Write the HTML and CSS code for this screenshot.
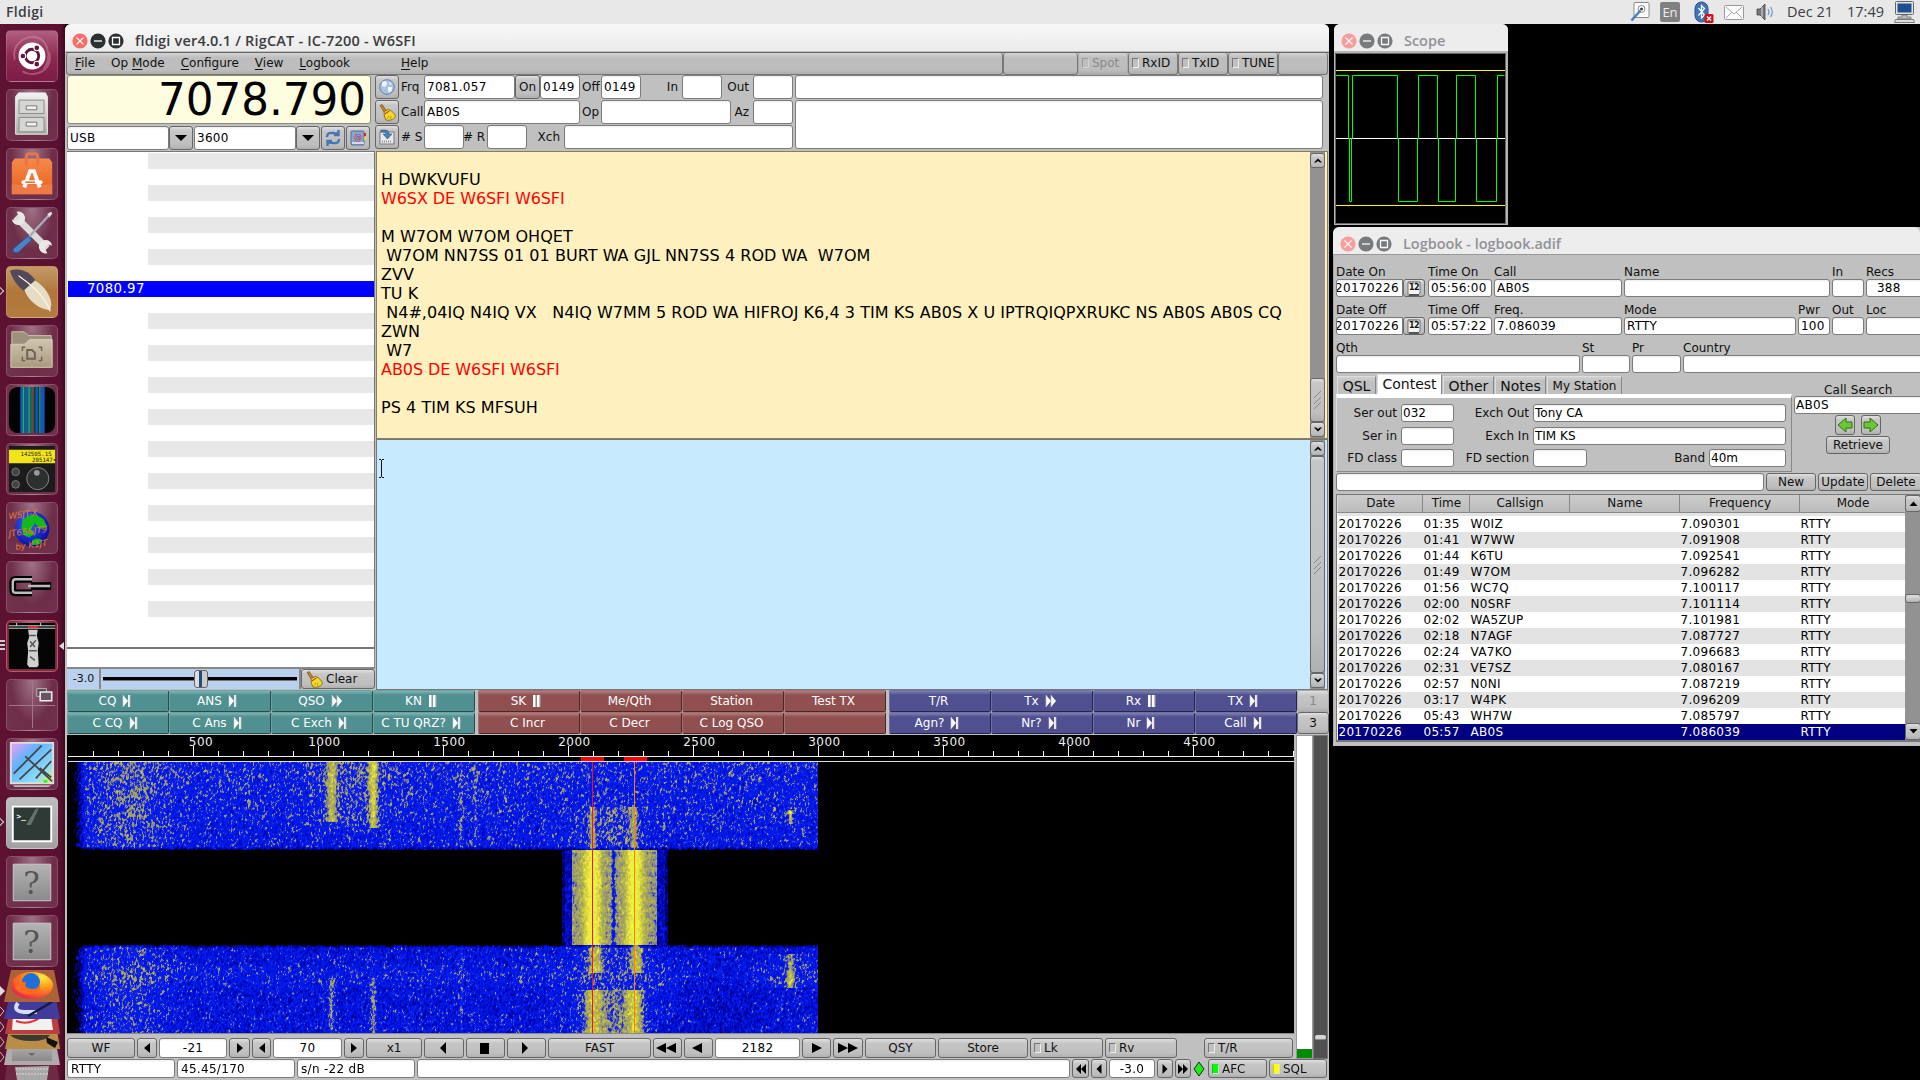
FILE: index.html
```html
<!DOCTYPE html>
<html lang="en">
<head>
<meta charset="utf-8">
<title>Fldigi</title>
<link rel="stylesheet" href="styles.css">
</head>
<body>
<svg class="defs" width="0" height="0">
  <defs>
    <linearGradient id="steel" x1="0" y1="0" x2="0" y2="1"><stop offset="0" stop-color="#f2f2ef"/><stop offset="1" stop-color="#a9aba6"/></linearGradient>
    <linearGradient id="grey" x1="0" y1="0" x2="0" y2="1"><stop offset="0" stop-color="#b4b4b4"/><stop offset="1" stop-color="#8a8a8a"/></linearGradient>
    <linearGradient id="orange" x1="0" y1="0" x2="0" y2="1"><stop offset="0" stop-color="#f6894a"/><stop offset="1" stop-color="#e8611c"/></linearGradient>
    <linearGradient id="sand" x1="0" y1="0" x2="0" y2="1"><stop offset="0" stop-color="#cfc4ae"/><stop offset="1" stop-color="#a89a80"/></linearGradient>
    <linearGradient id="sky" x1="0" y1="0" x2="1" y2="1"><stop offset="0" stop-color="#f79cf2"/><stop offset=".35" stop-color="#62b4fb"/><stop offset=".75" stop-color="#8edcf8"/><stop offset="1" stop-color="#f3f04a"/></linearGradient>
    <radialGradient id="fire" cx=".75" cy=".2" r=".9"><stop offset="0" stop-color="#ffe83a"/><stop offset=".5" stop-color="#ff8a1a"/><stop offset="1" stop-color="#e8204a"/></radialGradient>
    <radialGradient id="earth" cx=".4" cy=".35" r=".7"><stop offset="0" stop-color="#3a62ff"/><stop offset="1" stop-color="#0606a0"/></radialGradient>
    <symbol id="skip" viewBox="0 0 9 12"><path d="M1 0v12l5-6z" fill="#fff"/><path d="M6 0h2v12H6z" fill="#eee"/><path d="M8 0v12M1 0v12" stroke="#ccc" stroke-width=".6"/></symbol>
    <symbol id="fwd" viewBox="0 0 12 12"><path d="M1 0v12l5-6zM6 0v12l5-6z" fill="#fff"/><path d="M1 0v12M6 0v12" stroke="#bbb" stroke-width=".8"/></symbol>
    <symbol id="pause" viewBox="0 0 9 12"><path d="M1 0h2.600v12H1zM5 0h2.600v12H5z" fill="#fff"/><path d="M4 0v12M8 0v12" stroke="#bbb" stroke-width=".8"/></symbol>
    <symbol id="broom" viewBox="0 0 16 16"><path d="M1 1.500l2-1 4 6-2 1.300z" fill="#c8842c" stroke="#6b430c" stroke-width=".6"/><path d="M5 7l4-2c4 2 6 4 6.500 7-2 3-6 4-9 3C5 12 4.500 10 5 7z" fill="#f2d92c" stroke="#8a6d08" stroke-width=".9"/><path d="M5.300 9.500l4.500-3" stroke="#c03020" stroke-width="1"/><path d="M8 14l1-3M11 14l0-3" stroke="#a98a10" stroke-width=".7"/></symbol>
    <symbol id="cal" viewBox="0 0 16 16"><path d="M2 2h12v11l-2 2H2z" fill="#f4f4f4" stroke="#555" stroke-width=".8"/><path d="M4 1v3M7 1v3M10 1v3" stroke="#777"/><path d="M3 14h10v2H3z" fill="#555"/></symbol>
    <symbol id="tl" viewBox="0 0 8 10"><path d="M7 0v10L1 5z"/></symbol>
    <symbol id="tr" viewBox="0 0 8 10"><path d="M1 0v10l6-5z"/></symbol>
    <symbol id="tll" viewBox="0 0 20 10"><path d="M10 0v10L0 5zM20 0v10L10 5z"/></symbol>
    <symbol id="trr" viewBox="0 0 20 10"><path d="M0 0v10l10-5zM10 0v10l10-5z"/></symbol>
    <symbol id="up" viewBox="0 0 8 5"><path d="M0 4.500L4 .5l4 4H6L4 3 2 4.500z"/></symbol>
    <symbol id="down" viewBox="0 0 8 5"><path d="M0 .5l4 4 4-4H6L4 2 2 .5z"/></symbol>
    <symbol id="grip" viewBox="0 0 8 20"><path d="M0 8l7-7M0 14l7-7M0 19l7-7" stroke="#888" fill="none"/></symbol>
    <symbol id="winbtns" viewBox="0 0 54 16">
      <circle cx="8" cy="8" r="7.600" class="wb-close"/><path d="M4.500 4.500l7 7M11.500 4.500l-7 7" stroke="#fff" stroke-width="1.100"/>
      <circle cx="26" cy="8" r="7.600" class="wb-dark"/><path d="M22 8h8" stroke="#ddd" stroke-width="1.600"/>
      <circle cx="44" cy="8" r="7.600" class="wb-dark"/><path d="M40.500 4.500h7v7h-7z" fill="none" stroke="#fff" stroke-width="1.300"/>
    </symbol>
  </defs>
</svg>

<header class="panel">
  <span class="panel-title">Fldigi</span>
  <div class="tray">
    <svg width="20" height="20" viewBox="0 0 20 20"><rect x="4" y=".5" width="15" height="15" rx="1" fill="#fff" stroke="#888"/><circle cx="11.500" cy="7" r="3.500" fill="none" stroke="#888"/><circle cx="11.500" cy="7" r="1.500" fill="#345"/><path d="M1.500 18.500l9-10" stroke="#4b7fc0" stroke-width="2.600"/></svg>
    <span class="lang">En</span>
    <svg width="20" height="22" viewBox="0 0 20 22"><rect x="1" y="1" width="13" height="20" rx="6.500" fill="#3f75b8" stroke="#2a4f86"/><path d="M4.500 7l6 7-3 3V4.500l3 3-6 7" fill="none" stroke="#fff" stroke-width="1.200"/><rect x="10.500" y="13" width="9" height="9" rx="1.500" fill="#d40f14"/><path d="M13 15.500l4 4M17 15.500l-4 4" stroke="#fff" stroke-width="1.500"/></svg>
    <svg width="20" height="15" viewBox="0 0 20 15"><rect x=".5" y=".5" width="19" height="14" rx="1" fill="#fafafa" stroke="#999"/><path d="M2 2l8 7 8-7M2 13l6-6M18 13l-6-6" fill="none" stroke="#aaa"/></svg>
    <svg width="19" height="18" viewBox="0 0 19 18"><path d="M1 6h3l5-5v16l-5-5H1z" fill="#777" stroke="#444" stroke-width=".8"/><path d="M6 4v10" stroke="#ddd"/><path d="M12 6q2 3 0 6M14.500 4q3.500 5 0 10" fill="none" stroke="#6d94cc" stroke-width="1.200"/></svg>
    <span class="clock">Dec 21</span><span class="clock time">17:49</span>
    <svg width="21" height="22" viewBox="0 0 21 22"><rect x="1.500" y=".5" width="18" height="13" rx="1" fill="#e4e4e0" stroke="#666"/><path d="M3.500 2.500h14v9h-14z" fill="#1d4f92"/><path d="M8 14h5v2h4v2H4v-2h4z" fill="#bbb" stroke="#666" stroke-width=".7"/><path d="M1.500 18.500h18l1 3H.5z" fill="#ddd" stroke="#666" stroke-width=".8"/></svg>
  </div>
</header>

<div class="desktop">
<nav class="launcher">
  <div class="tile dash"><svg viewBox="0 0 52 52"><path d="M26 6c16 0 22 20 12 34M8 30C4 14 20 2 34 8M44 22c4 18-14 28-28 20" fill="none" stroke="#d48aa4" stroke-width="2" opacity=".5"/><circle cx="26" cy="26" r="14" fill="#fff"/><circle cx="26" cy="26" r="7" fill="none" stroke="#65133a" stroke-width="3"/><g fill="#65133a" stroke="#fff" stroke-width="1.200"><circle cx="16.500" cy="26" r="3"/><circle cx="31" cy="17.500" r="3"/><circle cx="31" cy="34.500" r="3"/></g></svg></div>
  <div class="tile"><svg viewBox="0 0 52 52"><path d="M12 3h28l2 4v39H9V7z" fill="url(#steel)" stroke="#eee"/><path d="M12.500 10.500h26v14h-26zM12.500 28.500h26v15h-26z" fill="#d5d6d2" stroke="#888"/><path d="M20 16.500h11v4H20zM20 33.500h11v4H20z" fill="#f2f2f2" stroke="#777"/></svg></div>
  <div class="tile"><svg viewBox="0 0 52 52"><path d="M5 14l3-4h36l3 4v33H5z" fill="url(#orange)"/><path d="M5 37h42v10H5z" fill="#ee7a45"/><path d="M20 17V8q0-3 3-3h6q3 0 3 3v9" fill="none" stroke="#e5764a" stroke-width="3"/><path d="M18 40l6-17h4l6 17" fill="none" stroke="#fff" stroke-width="4"/><path d="M17 34.500h18" stroke="#fff" stroke-width="4" stroke-linecap="round"/><path d="M19 34.500h10" stroke="#e8611c" stroke-width="1.500"/></svg></div>
  <div class="tile"><svg viewBox="0 0 52 52"><path d="M9 9l33 33" stroke="#dcdcd8" stroke-width="7"/><path d="M10 4a7 7 0 1 1-5 8l5 1 3-3zM42 47a7 7 0 1 1 5-8l-5-1-3 3z" fill="#e8e8e4"/><path d="M46 5L23 30" stroke="#aab" stroke-width="2.500"/><path d="M42 6l4-2 1 2-3 4z" fill="#ddd"/><path d="M22 29l4 4-14 13q-4 2-6-1 0-3 2-4z" fill="#4a82c4" stroke="#23508a"/></svg></div>
  <div class="tile wood"><svg viewBox="0 0 52 52"><path d="M3 4c11-4 20 1 26 9l2 8-9 7C12 22 6 14 3 4z" fill="#54495a"/><path d="M18 24l11-10c10 6 17 16 17 25l-1 6c-12-1-22-9-27-21z" fill="#e6dcc6"/><path d="M12 9c12 8 28 22 33 37" fill="none" stroke="#fff7e6" stroke-width="1.200"/></svg><i class="run"></i></div>
  <div class="tile"><svg viewBox="0 0 52 52"><path d="M5 40V6h13l4 4h24v20z" fill="#9d917b" stroke="#cfc3aa"/><path d="M4 43V19h14l6-5h23v29z" fill="url(#sand)" stroke="#d8ccb4"/><path d="M21 25h5l3 3v6h-8z" fill="none" stroke="#6e6250" stroke-width="2"/><path d="M16 26v-4h3M33 22h3v4M16 32v4h3M33 36h3v-4" fill="none" stroke="#6e6250" stroke-width="1.500"/></svg></div>
  <div class="tile"><svg viewBox="0 0 52 52"><rect x="2" y="2" width="48" height="48" rx="9" fill="#030505"/><path d="M14 2h25v48H14z" fill="#0d6a58"/><path d="M15 2v48M20 2v48M31 2v48M36 2v48M38 2v48" stroke="#1c4bd8" stroke-width="1.600"/><path d="M17 2v48M23 2v48M34 2v48" stroke="#28b89a"/><path d="M26.500 2v48" stroke="#b0264a" stroke-width="1.500"/><path d="M29 2v48M33 2v48" stroke="#052820"/></svg></div>
  <div class="tile"><svg viewBox="0 0 52 52"><path d="M2 2h48v48H2z" fill="#1b1b1b"/><path d="M2 6h48v14H2z" fill="#f2e41a"/><text x="14" y="12" class="lcd">142505.15</text><text x="26" y="19" class="lcd">205147•</text><circle cx="32" cy="36" r="11.500" fill="#2e3030" stroke="#888"/><circle cx="31" cy="30" r="3" fill="#999"/><circle cx="9" cy="29" r="4" fill="#444" stroke="#777"/><circle cx="9" cy="42" r="4" fill="#444" stroke="#777"/></svg></div>
  <div class="tile"><svg viewBox="0 0 52 52"><circle cx="26" cy="27" r="18" fill="url(#earth)"/><path d="M16 18q8-8 16-5l6 4 4 8-8 2-5-6-4 6 4 5-6 4-6-3-2-7zM26 39q6-4 11 0l-3 4-8 1z" fill="#12b81c"/><g class="scrawl"><text x="2" y="17" transform="rotate(-8 2 17)">WSJT-X</text><text x="2" y="35" transform="rotate(-7 2 35)">JT65&amp;JT9</text><text x="9" y="49" transform="rotate(-8 9 49)">by K1JT</text></g></svg></div>
  <div class="tile"><svg viewBox="0 0 52 52"><path d="M26 18H9q-3 0-3 3v8q0 3 3 3h17" fill="none" stroke="#000" stroke-width="7"/><path d="M25 25h21" stroke="#000" stroke-width="8"/><path d="M26 18H9q-3 0-3 3v8q0 3 3 3h17M22 25h23" fill="none" stroke="#bcbcbc" stroke-width="2.500"/></svg></div>
  <div class="tile active"><svg viewBox="0 0 52 52"><path d="M2 2h48v48H2z" fill="#050505"/><path d="M2 5h48M2 7.500h48M10 2v3M35 2v3" stroke="#ddd"/><path d="M22 6.500h10" stroke="#e33" stroke-width="2"/><path d="M22 9h10l-1 6 2 8-1 7 1 16-2 2h-8l-2-3 1-14-1-8 2-6z" fill="#d0d0d0"/><path d="M23 15h7M23 31h8M24 21l5 6M30 20l-6 7M24 37l5 4" stroke="#555" stroke-width="1.500"/></svg><i class="run multi"></i><i class="focus"></i></div>
  <div class="tile"><svg viewBox="0 0 52 52"><path d="M26.500 2v48M2 26.500h48" stroke="#a77a8c"/><path d="M31 9h10v8H31z" fill="#5a4450" stroke="#bbb"/><path d="M34.500 12.500h12v9h-12z" fill="#6b5560" stroke="#eee" stroke-width="1.600"/></svg></div>
  <div class="tile"><svg viewBox="0 0 52 52"><path d="M4 4h44v42H4z" fill="url(#sky)" stroke="#ddd" stroke-width="2"/><path d="M6 48h40l-3 2H8z" fill="#bbb"/><path d="M7 36L36 7M13 42L46 11M30 41l16-18M19 18l28 26M34 30l12 10" stroke="#444" stroke-width="1.800"/><path d="M38 44h4" stroke="#2f2" stroke-width="3"/></svg></div>
  <div class="tile light"><svg viewBox="0 0 52 52"><path d="M6 9h40v36H6z" fill="#2f3a36" stroke="#fff" stroke-width="2"/><path d="M30 11L20 28h5l8-17z" fill="#66716c"/><text x="10" y="22" class="prompt">&gt;_</text></svg><i class="run"></i></div>
  <div class="tile"><svg viewBox="0 0 52 52"><path d="M6.500 7.500h39v38h-39z" fill="url(#grey)" stroke="#ccc"/><text x="17" y="38" class="q">?</text></svg></div>
  <div class="tile"><svg viewBox="0 0 52 52"><path d="M6.500 7.500h39v38h-39z" fill="url(#grey)" stroke="#ccc"/><text x="17" y="38" class="q">?</text></svg></div>
  <div class="stack">
    <svg width="65" height="116" viewBox="0 0 65 116">
      <path d="M7 95h50l3 22H4z" fill="#6e2a42"/><path d="M15 98l2 13q15 5 30 0l2-14z" fill="#a8a8a8"/><path d="M16 100h32M16 105h32" stroke="#ddd" stroke-dasharray="2 1"/>
      <path d="M8 74h48l4 22H4z" fill="#b0aaac"/><path d="M12 74h40v18H12z" fill="url(#grey)"/><path d="M28 84l4 3 3-3" fill="#666"/>
      <path d="M9 60h48l3 20H5z" fill="#b98d47"/><path d="M10 66h40q-4 6-18 6-16 0-22-6z" fill="#3c3a30"/><path d="M46 68l12 5-3 6-8-5z" fill="#111"/>
      <path d="M9 45h48l3 20H5z" fill="#b9403f"/><path d="M13 47h38l2 14H12z" fill="#f4f0ee"/><path d="M16 52q14 5 26-5" stroke="#d33" fill="none" stroke-width="2"/>
      <path d="M9 30h47l4 20H4z" fill="#413c9c"/><path d="M18 34q-6 8 6 9h13" stroke="#d8dcf4" stroke-width="4" fill="none"/><path d="M52 33L28 47" stroke="#111a40" stroke-width="2.500"/>
      <path d="M11 1h43l6 32H4z" fill="#ab6238"/><ellipse cx="32" cy="16.500" rx="21" ry="13.500" fill="url(#fire)"/><circle cx="31" cy="13" r="9" fill="#1e6fd8"/><path d="M14 8q4 6 12 5-3 6 6 7 7 0 8-5 2 8-7 10-12 2-18-6z" fill="#ff6a1f"/>
      <g class="marks"><path d="M0 17l5 5-5 5z" fill="#ddd"/><path d="M0 38l4 4-4 5M0 53l4 5-4 5M0 68l4 5-4 5M0 83l4 5-4 5" fill="none" stroke="#cbb"/></g>
    </svg>
  </div>
</nav>

<main class="win main-win">
  <div class="titlebar"><svg class="wb" width="54" height="16"><use href="#winbtns"/></svg><span>fldigi ver4.0.1 / RigCAT - IC-7200 - W6SFI</span></div>
  <div class="menubar">
    <div class="menu"><span><u>F</u>ile</span><span>Op <u>M</u>ode</span><span><u>C</u>onfigure</span><span><u>V</u>iew</span><span><u>L</u>ogbook</span><span><u>H</u>elp</span></div>
    <div class="mcell"></div>
    <div class="mcell off"><i class="led"></i>Spot</div>
    <div class="mcell"><i class="led"></i>RxID</div>
    <div class="mcell"><i class="led"></i>TxID</div>
    <div class="mcell"><i class="led"></i>TUNE</div>
    <div class="mcell"></div>
  </div>

  <section class="rigbar">
    <div class="rig">
      <div class="freq">7078.790</div>
      <div class="rigrow">
        <div class="combo"><div class="in">USB</div><div class="btn"><i class="caret"></i></div></div>
        <div class="combo"><div class="in">3600</div><div class="btn"><i class="caret"></i></div></div>
        <div class="btn"><svg width="16" height="16" viewBox="0 0 16 16" fill="none" stroke="#4676b4" stroke-width="2.400"><path d="M2 7Q2 2 8 3q3 1 5 0M13.500 0v5H9M14 9q0 5-6 4-3-1-5 0M2.500 16v-5H7"/></svg></div>
        <div class="btn"><svg width="16" height="16" viewBox="0 0 16 16"><rect x="1" y="1" width="13" height="14" rx="1" fill="#8aa4cc" stroke="#54709c"/><path d="M2 13h12" stroke="#eee" stroke-width="1.500"/><path d="M14 3h2v3h-2z" fill="#d22"/><path d="M14 7h2v3h-2z" fill="#ed2"/><text x="4" y="10" class="at">@</text></svg></div>
      </div>
    </div>
    <div class="icons">
      <div class="btn"><svg width="16" height="16" viewBox="0 0 16 16"><circle cx="8" cy="8" r="7.300" fill="#a9c2e4" stroke="#5f7fae"/><path d="M3 3l4-1 1 3-2 3-3-1zM9 8l4 0 0 3-3 3-1-3zM10 3l3 2-2 1z" fill="#f2f6fb"/></svg></div>
      <div class="btn"><svg width="17" height="17"><use href="#broom"/></svg></div>
      <div class="btn"><svg width="16" height="16" viewBox="0 0 16 16"><rect x="1" y="3" width="14" height="12" fill="#e6e8ea" stroke="#778"/><path d="M3 12.500h10" stroke="#999" stroke-width="2" stroke-dasharray="1 1"/><path d="M2 1h4q4 0 4 4h3L8.500 10 4 5h3q0-2-2-2H2z" fill="#4a82b8" stroke="#2b5680" stroke-width=".6"/></svg></div>
    </div>
    <div class="fields">
      <div class="f1"><b>Frq</b><div class="in">7081.057</div><div class="btn">On</div><div class="in">0149</div><b>Off</b><div class="in">0149</div><b class="r">In</b><div class="in"></div><b class="r">Out</b><div class="in"></div></div>
      <div class="f2"><b>Call</b><div class="in">AB0S</div><b>Op</b><div class="in"></div><b class="r">Az</b><div class="in"></div></div>
      <div class="f3"><b># S</b><div class="in"></div><b># R</b><div class="in"></div><b class="r">Xch</b><div class="in"></div></div>
    </div>
    <div class="notes"><div class="in"></div><div class="in"></div></div>
  </section>

  <section class="work">
    <div class="side">
      <div class="browser">
        <div class="stripes"></div>
        <div class="picked">7080.97</div>
        <div class="stripes low"></div>
      </div>
      <div class="filter"></div>
      <div class="squelch">
        <span class="sval">-3.0</span>
        <div class="slider"><i class="track"></i><i class="thumb"></i></div>
        <div class="btn clear"><svg width="17" height="17"><use href="#broom"/></svg>Clear</div>
      </div>
    </div>
    <div class="text">
      <div class="rx">
<pre>
 
H DWKVUFU
<em>W6SX DE W6SFI W6SFI</em>

M W7OM W7OM OHQET
 W7OM NN7SS 01 01 BURT WA GJL NN7SS 4 ROD WA  W7OM
ZVV
TU K
 N4#,04IQ N4IQ VX   N4IQ W7MM 5 ROD WA HIFROJ K6,4 3 TIM KS AB0S X U IPTRQIQPXRUKC NS AB0S AB0S CQ
ZWN
 W7
<em>AB0S DE W6SFI W6SFI</em>

PS 4 TIM KS MFSUH</pre>
        <div class="scroll"><div class="btn sb"><svg width="8" height="5"><use href="#up"/></svg></div><div class="gap"></div><div class="btn knob short"><svg width="8" height="20"><use href="#grip"/></svg></div><div class="btn sb"><svg width="8" height="5"><use href="#down"/></svg></div></div>
      </div>
      <div class="tx">
        <svg class="ibeam" width="6" height="19" viewBox="0 0 6 19"><path d="M0 .5h2M3 .5h2M0 18.500h2M3 18.500h2M2.500 1v17" stroke="#111"/></svg>
        <div class="scroll"><div class="btn sb"><svg width="8" height="5"><use href="#up"/></svg></div><div class="btn knob"><svg width="8" height="20"><use href="#grip"/></svg></div><div class="btn sb"><svg width="8" height="5"><use href="#down"/></svg></div></div>
      </div>
    </div>
  </section>

  <section class="macros">
    <div class="mg teal">
      <div>CQ<svg width="9" height="12"><use href="#skip"/></svg></div><div>ANS<svg width="9" height="12"><use href="#skip"/></svg></div><div>QSO<svg width="12" height="12"><use href="#fwd"/></svg></div><div>KN<svg width="9" height="12"><use href="#pause"/></svg></div>
      <div>C CQ<svg width="9" height="12"><use href="#skip"/></svg></div><div>C Ans<svg width="9" height="12"><use href="#skip"/></svg></div><div>C Exch<svg width="9" height="12"><use href="#skip"/></svg></div><div>C TU QRZ?<svg width="9" height="12"><use href="#skip"/></svg></div>
    </div>
    <div class="mg brick">
      <div>SK<svg width="9" height="12"><use href="#pause"/></svg></div><div>Me/Qth</div><div>Station</div><div>Test TX</div>
      <div>C Incr</div><div>C Decr</div><div>C Log QSO</div><div></div>
    </div>
    <div class="mg violet">
      <div>T/R</div><div>Tx<svg width="12" height="12"><use href="#fwd"/></svg></div><div>Rx<svg width="9" height="12"><use href="#pause"/></svg></div><div>TX<svg width="9" height="12"><use href="#skip"/></svg></div>
      <div>Agn?<svg width="9" height="12"><use href="#skip"/></svg></div><div>Nr?<svg width="9" height="12"><use href="#skip"/></svg></div><div>Nr<svg width="9" height="12"><use href="#skip"/></svg></div><div>Call<svg width="9" height="12"><use href="#skip"/></svg></div>
    </div>
    <div class="mset"><div class="btn dim">1</div><div class="btn">3</div></div>
  </section>

  <section class="lower">
    <div class="wfcol">
      <div class="wf">
        <div class="scale"><span>500</span><span>1000</span><span>1500</span><span>2000</span><span>2500</span><span>3000</span><span>3500</span><span>4000</span><span>4500</span></div>
        <div class="markers"><i></i><i></i></div>
        <canvas id="waterfall" width="1227" height="271"></canvas>
      </div>
      <div class="ctl">
        <div class="btn">WF</div>
        <div class="btn"><svg width="8" height="10"><use href="#tl"/></svg></div><div class="in c">-21</div><div class="btn"><svg width="8" height="10"><use href="#tr"/></svg></div>
        <div class="btn"><svg width="8" height="10"><use href="#tl"/></svg></div><div class="in c">70</div><div class="btn"><svg width="8" height="10"><use href="#tr"/></svg></div>
        <div class="btn">x1</div>
        <div class="btn shift"><svg width="8" height="12" viewBox="0 0 8 12"><path d="M7 0v12L1 6z"/></svg></div><div class="btn shift"><i class="stop"></i></div><div class="btn shift"><svg width="8" height="12" viewBox="0 0 8 12"><path d="M1 0v12l6-6z"/></svg></div>
        <div class="btn">FAST</div>
        <div class="btn shift"><svg width="20" height="10"><use href="#tll"/></svg></div><div class="btn shift"><svg width="10" height="10" viewBox="0 0 10 10"><path d="M10 0v10L0 5z"/></svg></div>
        <div class="in c">2182</div>
        <div class="btn"><svg width="10" height="10" viewBox="0 0 10 10"><path d="M0 0v10l10-5z"/></svg></div><div class="btn"><svg width="20" height="10"><use href="#trr"/></svg></div>
        <div class="btn">QSY</div><div class="btn">Store</div>
        <div class="btn led-btn"><i class="led"></i>Lk</div><div class="btn led-btn"><i class="led"></i>Rv</div><div class="btn led-btn tr"><i class="led"></i>T/R</div>
      </div>
    </div>
    <div class="meter"><i></i></div>
    <div class="vslider"><i></i></div>
  </section>

  <section class="status">
    <div class="in">RTTY</div><div class="in">45.45/170</div><div class="in">s/n -22 dB</div><div class="in"></div>
    <div class="btn"><svg width="10" height="10" viewBox="0 0 10 10"><path d="M5 0v10L0 5zM10 0v10L5 5z"/></svg></div>
    <div class="btn"><svg width="6" height="10" viewBox="0 0 6 10"><path d="M5.500 0v10L.5 5z"/></svg></div>
    <div class="in c">-3.0</div>
    <div class="btn"><svg width="6" height="10" viewBox="0 0 6 10"><path d="M.5 0v10l5-5z"/></svg></div>
    <div class="btn"><svg width="10" height="10" viewBox="0 0 10 10"><path d="M0 0v10l5-5zM5 0v10l5-5z"/></svg></div>
    <svg class="diamond" width="12" height="16" viewBox="0 0 12 16"><path d="M6 1l5 7-5 7-5-7z" fill="#18f018" stroke="#222"/></svg>
    <div class="btn led-btn"><i class="led green"></i>AFC</div>
    <div class="btn led-btn"><i class="led yellow"></i>SQL</div>
  </section>
</main>

<section class="win scope-win">
  <div class="titlebar idle"><svg class="wb" width="54" height="16"><use href="#winbtns"/></svg><span>Scope</span></div>
  <svg class="scope" width="169" height="169" viewBox="0 0 169 169" fill="none">
    <path d="M0 84.500h169" stroke="#fff"/><path d="M0 16.500h169M0 151.500h169" stroke="#ff0"/>
    <path d="M0 21.500h12.500v63h1v63h2v-63h1v-63h45v63h1v63h19v-63h1v-63h19v63h1v63h17v-63h1v-63h19v63h1v63h20v-63h1v-63h7" stroke="#0f0"/>
  </svg>
</section>

<section class="win log-win">
  <div class="titlebar idle"><svg class="wb" width="54" height="16"><use href="#winbtns"/></svg><span>Logbook - logbook.adif</span></div>
  <div class="log">
    <div class="lrow r1">
      <label>Date On<span class="datein"><span class="in"><s>20170226</s></span><span class="btn"><svg width="16" height="16"><use href="#cal"/></svg><small>12</small></span></span></label>
      <label>Time On<span class="in">05:56:00</span></label><label>Call<span class="in">AB0S</span></label><label>Name<span class="in"></span></label><label>In<span class="in"></span></label><label>Recs<span class="in recs">388</span></label>
    </div>
    <div class="lrow r2">
      <label>Date Off<span class="datein"><span class="in"><s>20170226</s></span><span class="btn"><svg width="16" height="16"><use href="#cal"/></svg><small>12</small></span></span></label>
      <label>Time Off<span class="in">05:57:22</span></label><label>Freq.<span class="in">7.086039</span></label><label>Mode<span class="in">RTTY</span></label><label>Pwr<span class="in">100</span></label><label>Out<span class="in"></span></label><label>Loc<span class="in"></span></label>
    </div>
    <div class="lrow r3"><label>Qth<span class="in"></span></label><label>St<span class="in"></span></label><label>Pr<span class="in"></span></label><label>Country<span class="in"></span></label></div>

    <div class="mid">
      <div class="tabbox">
        <div class="tabs"><span>QSL</span><span class="on">Contest</span><span>Other</span><span>Notes</span><span class="sm">My Station</span></div>
        <div class="tabpanel">
          <b>Ser out</b><div class="in">032</div><b>Exch Out</b><div class="in wide">Tony CA</div>
          <b>Ser in</b><div class="in"></div><b>Exch In</b><div class="in wide">TIM KS</div>
          <b>FD class</b><div class="in"></div><b>FD section</b><div class="in"></div><b>Band</b><div class="in">40m</div>
        </div>
      </div>
      <div class="search">
        <b>Call Search</b><div class="in">AB0S</div>
        <div class="arrows">
          <div class="btn"><svg width="16" height="16" viewBox="0 0 16 16"><path d="M1 8l8-7v4h6v6H9v4z" fill="#6cc832" stroke="#2f7010"/></svg></div>
          <div class="btn"><svg width="16" height="16" viewBox="0 0 16 16"><path d="M15 8L7 1v4H1v6h6v4z" fill="#6cc832" stroke="#2f7010"/></svg></div>
        </div>
        <div class="btn retrieve">Retrieve</div>
      </div>
    </div>
    <div class="actions"><div class="in"></div><div class="btn">New</div><div class="btn">Update</div><div class="btn">Delete</div></div>

    <div class="tablewrap">
      <table>
        <colgroup><col class="cd"><col class="ct"><col class="cc"><col class="cn"><col class="cf"><col class="cm"></colgroup>
        <thead><tr><th>Date</th><th>Time</th><th>Callsign</th><th>Name</th><th>Frequency</th><th>Mode</th></tr></thead>
        <tbody>
          <tr class="cut"><td colspan="6"></td></tr>
          <tr><td>20170226</td><td>01:35</td><td>W0IZ</td><td></td><td>7.090301</td><td>RTTY</td></tr>
          <tr><td>20170226</td><td>01:41</td><td>W7WW</td><td></td><td>7.091908</td><td>RTTY</td></tr>
          <tr><td>20170226</td><td>01:44</td><td>K6TU</td><td></td><td>7.092541</td><td>RTTY</td></tr>
          <tr><td>20170226</td><td>01:49</td><td>W7OM</td><td></td><td>7.096282</td><td>RTTY</td></tr>
          <tr><td>20170226</td><td>01:56</td><td>WC7Q</td><td></td><td>7.100117</td><td>RTTY</td></tr>
          <tr><td>20170226</td><td>02:00</td><td>N0SRF</td><td></td><td>7.101114</td><td>RTTY</td></tr>
          <tr><td>20170226</td><td>02:02</td><td>WA5ZUP</td><td></td><td>7.101981</td><td>RTTY</td></tr>
          <tr><td>20170226</td><td>02:18</td><td>N7AGF</td><td></td><td>7.087727</td><td>RTTY</td></tr>
          <tr><td>20170226</td><td>02:24</td><td>VA7KO</td><td></td><td>7.096683</td><td>RTTY</td></tr>
          <tr><td>20170226</td><td>02:31</td><td>VE7SZ</td><td></td><td>7.080167</td><td>RTTY</td></tr>
          <tr><td>20170226</td><td>02:57</td><td>N0NI</td><td></td><td>7.087219</td><td>RTTY</td></tr>
          <tr><td>20170226</td><td>03:17</td><td>W4PK</td><td></td><td>7.096209</td><td>RTTY</td></tr>
          <tr><td>20170226</td><td>05:43</td><td>WH7W</td><td></td><td>7.085797</td><td>RTTY</td></tr>
          <tr class="sel"><td>20170226</td><td>05:57</td><td>AB0S</td><td></td><td>7.086039</td><td>RTTY</td></tr>
        </tbody>
      </table>
      <div class="scroll lscroll"><div class="btn sb"><svg width="9" height="5" viewBox="0 0 8 5"><path d="M0 5l4-4.500L8 5z"/></svg></div><div class="gap a"></div><div class="btn tiny"></div><div class="gap"></div><div class="btn sb"><svg width="9" height="5" viewBox="0 0 8 5"><path d="M0 0l4 4.500L8 0z"/></svg></div></div>
    </div>
  </div>
</section>
</div>
<script src="waterfall.js"></script>
</body>
</html>
```
FILE: styles.css
```css
* { box-sizing: border-box; }
html, body { margin: 0; height: 100%; }
body { width: 1920px; height: 1080px; overflow: hidden; background: #000; color: #111; font: 12px/14px "DejaVu Sans", sans-serif; }
.defs { position: absolute; }
b { font-weight: normal; }
s { text-decoration: none; }
svg { flex: none; display: block; }

/* top panel */
.panel { display: flex; justify-content: space-between; align-items: center; height: 24px; background: #e8e8e8; color: #3c3c46; font-family: "Open Sans", "Noto Sans", sans-serif; }
.panel-title { padding-left: 6px; font-size: 14px; font-weight: 600; letter-spacing: .3px; }
.tray { display: flex; align-items: center; width: 290px; }
.tray > svg:nth-of-type(1) { margin-right: 10px; }
.lang { width: 20px; height: 20px; margin-right: 14px; border-radius: 2px; background: #808080; color: #eee; font-size: 13px; line-height: 20px; text-align: center; }
.tray > svg:nth-of-type(2) { margin-right: 10px; }
.tray > svg:nth-of-type(3) { margin-right: 12px; }
.tray > svg:nth-of-type(4) { margin-right: 12px; }
.clock { width: 60px; font-size: 14.5px; white-space: nowrap; }
.clock.time { width: 47px; }

.desktop { position: relative; height: 1056px; }

/* launcher */
.launcher { display: flex; flex-direction: column; width: 65px; height: 1056px; padding: 6px 0 0 6px; gap: 7px; background: linear-gradient(90deg, #5c1230, #5a1030 60px, #3c0a20); overflow: hidden; }
.tile { position: relative; flex: none; width: 52px; height: 52px; border: 1px solid rgba(255,255,255,.16); border-radius: 5px; background: radial-gradient(ellipse at 50% 0, rgba(255,255,255,.42), rgba(255,255,255,.12) 60%, rgba(255,255,255,.14)); }
.tile svg { width: 50px; height: 50px; }
.tile.dash { background: linear-gradient(#b06080, #8e2a50 50%, #7c1c44); }
.tile.wood { background: linear-gradient(#c49a68, #b0763a 50%, #b47c40); }
.tile.light { background: linear-gradient(#bdbdbd, #a2a2a2); }
.tile.active { border-color: #d0505c; }
.run { position: absolute; left: -10px; top: 21px; width: 6px; height: 6px; border: solid #ccc; border-width: 1px 1px 0 0; transform: rotate(45deg); }
.run.multi { left: -7px; top: 19px; width: 5px; height: 11px; border: 0; transform: none; background: repeating-linear-gradient(#ccc 0 2px, transparent 2px 4px); }
.focus { position: absolute; right: -7px; top: 21px; border: 4px solid transparent; border-right: 5px solid #ddd; border-left: 0; }
.lcd { font: 6px "DejaVu Sans Mono", monospace; fill: #222; }
.scrawl { font: italic 9px "DejaVu Sans", sans-serif; fill: #e07a3a; }
.prompt { font: bold 8px "DejaVu Sans Mono", monospace; fill: #fff; }
.q { font: 32px "DejaVu Serif", serif; fill: #555; }
.at { font: 8px "DejaVu Sans", sans-serif; fill: #b8305a; }
.stack { flex: none; margin: -5px 0 0 -6px; height: 116px; }

/* windows */
.win { position: absolute; }
.titlebar { display: flex; align-items: center; height: 27px; padding: 6px 0 0 7px; gap: 9px; border-radius: 6px 6px 0 0; background: linear-gradient(#f8f8f8, #ebebeb); color: #3c3c40; font: 600 14.5px/18px "Open Sans", "Noto Sans", sans-serif; letter-spacing: .19px; white-space: nowrap; }
.titlebar.idle { background: #ededed; color: #929298; letter-spacing: -.03px; }
.wb-close { fill: #fc6c64; }
.wb-dark { fill: #2b3133; }
.idle .wb { opacity: .6; }
.main-win { left: 65px; top: 0; width: 1264px; height: 1056px; background: #c0c0c0; border-radius: 6px 6px 0 0; }
.scope-win { left: 1334px; top: 0; width: 174px; height: 201px; background: #b4b4b4; border-radius: 6px 6px 0 0; }
.scope { margin: 3px 0 0 2px; background: #000; outline: 1px solid #666; }
.log-win { left: 1333px; top: 203px; width: 587px; height: 519px; overflow: hidden; background: #c0c0c0; border-radius: 6px 0 0 0; }

/* widgets */
.in, .btn { display: flex; align-items: center; white-space: nowrap; border: 1px solid #7c7c7c; border-radius: 3px; overflow: hidden; }
.in { background: linear-gradient(#ececec, #fff 2px); padding-left: 2px; color: #000; letter-spacing: .3px; }
.btn { justify-content: center; border-color: #666; background: linear-gradient(#e0e0e0, #c6c6c6 4px, #bebebe 80%, #b0b0b0); }
.in.c { justify-content: center; padding: 0; }
.caret { border: 6px solid transparent; border-top-color: #000; border-bottom: 0; }
.led { width: 7px; height: 10px; border: 1px solid #777; border-right-color: #eee; border-bottom-color: #eee; background: #c0c0c0; }
.led.green { background: #0f0; border-color: #0f0 #ddd #ddd #0c0; }
.led.yellow { background: #ff0; border-color: #ff0 #ddd #ddd #cc0; }

/* menu bar */
.menubar { display: flex; height: 23px; margin: 1px 0 0 1px; border-top: 1px solid #666; }
.menu, .mcell { display: flex; align-items: center; padding-bottom: 2px; border: 1px solid #777; border-top: 0; border-radius: 3px; background: linear-gradient(#d4d4d4, #bdbdbd 5px, #bdbdbd 80%, #adadad); }
.menu { width: 937px; padding-left: 8px; }
.menu span { margin-right: 16px; }
.menu span:nth-child(5) { margin-right: 51px; }
.menu u { text-underline-offset: 2px; }
.mcell { width: 50px; gap: 3px; padding-left: 3px; white-space: nowrap; letter-spacing: 0; }
.mcell:nth-child(2) { width: 75px; }
.mcell.off { color: #8a8a8a; border-color: #aaa; }
.mcell.off .led { opacity: .5; }

/* rig and qso fields */
.rigbar { display: grid; grid-template-columns: 305px 24px 395px 532px; margin: 0 0 0 2px; height: 76px; }
.rig { width: 304px; }
.freq { height: 49px; padding-right: 4px; border: 1px solid #8a8a78; border-radius: 3px; background: #fffde0; font-size: 43.6px; line-height: 49px; text-align: right; color: #000; }
.rigrow { display: grid; grid-template-columns: 126px 126px 24px 24px; gap: 1px; margin-top: 2px; height: 24px; }
.combo { display: grid; grid-template-columns: 1fr 24px; }
.icons, .fields { display: grid; grid-template-rows: 24px 24px 24px; gap: 1px; }
.icons { margin-left: 3px; width: 24px; }
.fields { margin-left: 3px; }
.fields > div { display: grid; align-items: stretch; }
.fields b { align-self: center; padding-left: 2px; white-space: nowrap; }
.fields b.r { text-align: right; padding: 0 4px 0 0; }
.fields .f1 { grid-template-columns: 25px 91px 25px 40px 21px 40px 41px 40px 31px 40px; }
.fields .f2 { grid-template-columns: 25px 156px 21px 130px 22px 40px; }
.fields .f3 { grid-template-columns: 25px 40px 23px 40px 37px 229px; }
.f3 b:nth-child(3) { padding-left: 0; margin-left: -1px; }
.notes { display: grid; grid-template-rows: 24px 49px; gap: 1px; margin-left: 4px; }

/* working area */
.work { display: grid; grid-template-columns: 309px 952px; margin-left: 2px; height: 539px; }
.side { display: flex; flex-direction: column; padding-right: 1px; }
.browser { height: 498px; padding-top: 1px; border: solid #777; border-width: 1px 1px 2px 0; background: #fff; }
.stripes { height: 128px; margin-left: 81px; background: repeating-linear-gradient(#e8e8e8 0 16px, #fff 16px 32px); }
.stripes.low { height: 320px; background: repeating-linear-gradient(#fff 0 16px, #e8e8e8 16px 32px); }
.picked { height: 16px; margin-left: 1px; padding-left: 19px; background: #00f; color: #fff; font-size: 13.3px; line-height: 16px; letter-spacing: .4px; }
.filter { height: 18px; background: #fff; border-right: 1px solid #888; }
.squelch { display: grid; grid-template-columns: 34px 200px 74px; height: 22px; margin-top: 0; border-top: 2px solid #888; }
.sval, .slider { display: flex; align-items: center; background: #b9d0ee; border-right: 2px solid #888; font-size: 11px; }
.sval { justify-content: center; padding-left: 1px; }
.slider { position: relative; padding: 0 2px 0 2px; }
.track { height: 4px; width: 100%; background: #000; border-bottom: 1px solid #777; }
.thumb { position: absolute; left: 93px; top: 1px; width: 14px; height: 18px; border: 1px solid #666; border-radius: 3px; background: linear-gradient(90deg, #ddd 4px, #234d78 4px 7px, #ccc 7px); }
.clear { gap: 3px; justify-content: flex-start; padding-left: 4px; }
.text { display: flex; flex-direction: column; }
.rx, .tx { display: flex; justify-content: space-between; padding-right: 2px; border: 1px solid #777; }
.rx { height: 288px; border-color: #8a7e5a; background: #fff0bf; }
.tx { height: 251px; background: #c8eaff; }
.rx pre { margin: -1px 0 0 4px; font: 16px/19px "DejaVu Sans", sans-serif; color: #000; letter-spacing: .05px; }
.rx em { font-style: normal; color: #f00; letter-spacing: -.07px; }
.ibeam { margin: 19px 0 0 2px; }
.scroll { display: flex; flex-direction: column; width: 15px; padding: 1px 0; background: #929292; }
.sb { flex: none; height: 15px; }
.gap { flex: 1; }
.knob { flex: 1; }
.knob.short { flex: none; height: 44px; }

/* macros */
.macros { display: flex; height: 45px; margin-left: 2px; }
.mg { display: grid; grid-template-columns: repeat(4, 102px); grid-template-rows: 22px 22px; width: 408px; margin-right: 3px; color: #fff; }
.mg > div { display: flex; align-items: center; justify-content: center; gap: 6px; padding-right: 3px; border: 1px solid; border-radius: 2px; }
.mg svg[width="9"] { margin-right: 3px; }
.teal > div { background: linear-gradient(#7fb4b4, #509090 4px); border-color: #6fa0a0 #244e4e #244e4e #6fa0a0; }
.brick > div { background: linear-gradient(#b48080, #905050 4px); border-color: #a07070 #4e2424 #4e2424 #a07070; }
.violet > div { background: linear-gradient(#8080b4, #505090 4px); border-color: #7070a0 #24244e #24244e #7070a0; }
.violet { margin-right: 0; }
.mset { display: grid; grid-template-rows: 22px 22px; width: 32px; }
.mset .dim { color: #888; border-color: #aaa; }

/* waterfall */
.lower { display: grid; grid-template-columns: 1229px 17px 15px; height: 324px; margin-left: 2px; }
.wf { width: 1228px; height: 299px; padding-left: 1px; background: #000; border-right: 1px solid #bbb; border-bottom: 1px solid #888; overflow: hidden; }
.scale { display: flex; height: 22px; padding-left: 69px; border-bottom: 1px solid #eee; color: #eee; letter-spacing: .5px; line-height: 15px;
  background: repeating-linear-gradient(90deg, #fff 0 1px, transparent 1px 25px) 25px 100% / 1202px 5px no-repeat, repeating-linear-gradient(90deg, #fff 0 1px, transparent 1px 125px) 125px 100% / 1102px 10px no-repeat; }
.scale span { flex: none; width: 125px; text-align: center; }
.scale span:first-child { padding-left: 3px; }
.markers { display: flex; height: 5px; padding-left: 513px; gap: 20px; border-bottom: 1px solid #ddd; }
.markers i { width: 23px; height: 4px; background: #f00; }
#waterfall { display: block; }
.ctl { display: grid; height: 20px; margin-top: 4px; width: 1227px; gap: 2px;
  grid-template-columns: 68px 20px 68px 21px 19px 69px 20px 56px 40px 39px 39px 103px 29px 29px 85px 29px 30px 71px 90px 73px 72px 1fr; }
.shift { padding-right: 3px; }
.led-btn { justify-content: flex-start; gap: 3px; padding-left: 3px; }
.led-btn.tr { margin-left: 25px; margin-right: 1px; }
.stop { width: 9px; height: 11px; background: #000; }
.meter { display: flex; align-items: flex-end; background: #fff; border: 1px solid #999; }
.meter i { flex: 1; height: 9px; background: #008c00; }
.vslider { display: flex; align-items: flex-end; justify-content: center; padding-bottom: 18px; background: #505050; border: 1px solid #777; }
.vslider i { width: 11px; height: 5px; border-radius: 2px; background: #d4d4d4; border-bottom: 1px solid #888; }
.status { display: grid; height: 19px; margin: 0 0 0 2px; gap: 2px; grid-template-columns: 108px 118px 118px 653px 17px 16px 46px 16px 16px 13px 59px 58px; }
.status .in { padding-left: 3px; }
.status .in.c { padding: 0; }
.diamond { align-self: center; }

/* logbook */
.log { padding: 4px 0 0 2px; border-top: 1px solid #999; border-left: 1px solid #aaa; }
.lrow { display: grid; gap: 2px; height: 38px; }
.r1 { grid-template-columns: 90px 64px 128px 206px 32px 60px; }
.r2 { grid-template-columns: 90px 64px 128px 172px 32px 32px 60px; }
.r3 { grid-template-columns: 244px 48px 49px 240px; }
.lrow label { display: flex; flex-direction: column; padding-top: 6px; line-height: 14px; white-space: nowrap; }
.lrow .in, .lrow .btn { height: 18px; line-height: 16px; letter-spacing: .2px; }
.recs { padding-left: 10px; }
.datein { display: grid; grid-template-columns: 67px 22px; }
.datein .in { padding: 0; border-radius: 3px 0 0 3px; }
.datein s { margin-left: -2px; letter-spacing: .35px; }
.datein .btn { position: relative; }
.datein small { position: absolute; left: 5px; top: 1px; font-size: 8px; font-weight: bold; line-height: 14px; letter-spacing: -.5px; }
.mid { display: grid; grid-template-columns: 456px 130px; gap: 2px; height: 98px; margin-top: 1px; }
.tabs { display: flex; align-items: flex-end; height: 20px; gap: 1px; padding-left: 1px; font-size: 14px; }
.tabs span { height: 18px; line-height: 18px; padding: 0 4px; border: solid #888; border-width: 0 1px 0 0; background: linear-gradient(#d0d0d0, #c0c0c0 5px); text-align: center; letter-spacing: 0; border-top: 1px solid #ddd; border-left: 1px solid #ddd; }
.tabs .on { height: 20px; line-height: 19px; background: #fff; width: 65px; }
.tabs .sm { font-size: 12px; padding: 0; width: 75px; }
.tabs span:nth-child(1) { width: 39px; }
.tabs span:nth-child(3) { width: 51px; }
.tabs span:nth-child(4) { width: 51px; }
.tabpanel { display: grid; grid-template-columns: 64px 53px 79px 54px 122px 77px; grid-template-rows: 18px 18px 18px; row-gap: 4.5px; height: 78px; padding-top: 6px; border-top: 4px solid #fff; border-right: 1px solid #888; border-bottom: 1px solid #888; border-left: 1px solid #ddd; }
.tabpanel b { align-self: center; padding-right: 4px; text-align: right; white-space: nowrap; }
.tabpanel .in { padding-left: 1px; letter-spacing: 0; }
.tabpanel .wide { grid-column: span 3; }
.search { display: flex; flex-direction: column; }
.search b { height: 22px; padding: 10px 0 0 30px; line-height: 12px; letter-spacing: .1px; }
.search .in { height: 18px; padding-left: 1px; }
.arrows { display: flex; gap: 6px; height: 20px; margin: 1px 0 0 41px; }
.arrows .btn { width: 20px; height: 20px; }
.retrieve { width: 64px; height: 18px; margin: 1px 0 0 32px; }
.actions { display: grid; grid-template-columns: 428px 50px 50px 52px; gap: 2px; height: 18px; margin-top: 1px; }
.tablewrap { display: grid; grid-template-columns: 568px 16px; height: 248px; margin-top: 3px; border: 1px solid #777; border-width: 1px 0 2px 1px; background: #fff; overflow: hidden; }
table { width: 568px; table-layout: fixed; border-collapse: collapse; border-spacing: 0; }
.cd { width: 85px; } .ct { width: 47px; } .cc { width: 100px; } .cn { width: 110px; } .cf { width: 120px; } .cm { width: 106px; }
th { height: 17px; padding: 0 0 0 1px; font-weight: normal; line-height: 16px; border: 1px solid #888; border-left-color: #ddd; border-width: 0 1px 1px 1px; background: linear-gradient(#ccc, #bbb); }
td { height: 16px; padding: 0 0 0 1px; line-height: 16px; white-space: nowrap; letter-spacing: .3px; color: #000; }
tr.cut td { height: 4px; font-size: 0; line-height: 0; background: #e3e3e3; }
tbody tr:nth-child(odd) { background: #e3e3e3; }
tbody tr.sel { background: #000080; }
tr.sel td { color: #fff; }
.lscroll { width: 16px; padding: 0; }
.lscroll .sb { height: 17px; }
.gap.a { flex: none; height: 82px; }
.tiny { flex: none; height: 9px; }
```
FILE: waterfall.js
```js
// Paints the audio waterfall: two receive periods around one strong transmitted pair of tones.
(function () {
  var canvas = document.getElementById('waterfall');
  var ctx = canvas.getContext('2d');
  var W = canvas.width, H = canvas.height, END = 750;
  var seed = 7081;
  function rnd() {
    seed = (seed * 1664525 + 1013904223) >>> 0;
    return seed / 4294967296;
  }
  var raw = new Float32Array(W * (H + 3));
  for (var i = 0; i < raw.length; i++) raw[i] = rnd() + rnd() + rnd() - 1.5;

  function bell(x, c, w) { var d = (x - c) / w; return Math.exp(-d * d); }

  function level(x, y) {
    var top = y < 88, bottom = y >= 183, v;
    if (top || bottom) {
      v = 1.0 + 0.36 * bell(x, 62, 36);
      if (top) {
        v += 0.22 * Math.max(0, 1 - y / 120);
        var fade = Math.max(0, Math.min(1, (72 - y) / 16));
        v += 0.9 * bell(x, 263, 5) * (y < 60 ? 1 : 0) + 0.26 * bell(x, 284, 38) * fade;
        if (y < 66) v += 1.3 * bell(x, 305, 4);
        v += 0.4 * (bell(x, 393, 2) + bell(x, 407, 2));
        if (y > 44) v += 0.75 * bell(x, 524, 4) + 0.85 * bell(x, 565, 4) + 0.3 * bell(x, 545, 30);
        if (y > 48 && y < 62) v += 1.5 * bell(x, 722, 1.5);
        if (y > 47 && y < 52) v += 0.8 * bell(x, 722, 5);
      } else {
        var t = y - 183;
        v += 0.18 * bell(t, 30, 10) - 0.05;
        if (t > 32) v += 0.7 * bell(x, 263, 3) + 0.75 * bell(x, 305, 3);
        if (t < 28) v += 1.1 * bell(x, 527, 7) + 1.1 * bell(x, 568, 6);
        v += 0.32 * bell(x, 545, 45);
        if (t > 44) v += 1.05 * bell(x, 525, 9) + 1.25 * bell(x, 566, 8) + 0.4 * bell(x, 545, 22);
        if (t > 8 && t < 43) v += (t > 25 ? 1.1 : 0.7) * bell(x, 722, 3.5) + 0.28 * bell(x, 722, 20);
        v += 0.35 * bell(x, 393, 2);
        v -= 0.18 * bell(x, 650, 50) * Math.min(1, t / 40);
      }
      if (x < 17) v -= (17 - x) * 0.12;
      if (y > 84 && y < 88) v -= (y - 84) * 0.25;
      if (y < 186 && bottom) v -= (186 - y) * 0.25;
      return v;
    }
    if (x < 494 || x > 599) return -9;
    v = x < 504 || x > 588 ? 0.7 : 1.88;
    if (v > 1) v += 1.35 * bell(x, 524, 9) + 1.35 * bell(x, 566, 9) - 0.7 * bell(x, 545, 1.6);
    if (v > 1 && y % 10 < 5 && v < 2.4) v -= 0.15;
    if (x < 497 || x > 596) v -= 0.4;
    return v;
  }

  function mix(a, b, t) { return a + (b - a) * t; }
  function paint(v, d, p) {
    var stops = [[0, 0, 0, 0], [0.3, 0, 0, 110], [0.75, 0, 8, 195], [1.0, 0, 25, 232], [1.4, 12, 30, 235], [1.75, 145, 145, 120], [2.4, 190, 188, 66], [3.1, 238, 238, 64], [5, 255, 255, 60]];
    var r = stops[stops.length - 1];
    if (v <= 0) r = stops[0];
    else for (var k = 1; k < stops.length; k++) {
      if (v < stops[k][0]) {
        var a = stops[k - 1], b = stops[k], t = (v - a[0]) / (b[0] - a[0]);
        r = [0, mix(a[1], b[1], t), mix(a[2], b[2], t), mix(a[3], b[3], t)];
        break;
      }
    }
    d[p] = r[1]; d[p + 1] = r[2]; d[p + 2] = r[3]; d[p + 3] = 255;
  }

  var img = ctx.createImageData(W, H);
  for (var y = 0; y < H; y++) {
    for (var x = 0; x < W; x++) {
      var q = (y + 1) * W + x;
      var n = 0.8 * raw[q] + 0.8 * raw[q - W] + 0.6 * raw[q + W] + 0.6 * raw[q + 1] + 0.4 * raw[q - W + 1];
      var inBurst = y >= 88 && y < 183;
      if (n < 0) n *= 0.55;
      var v = x < END ? level(x, y) + n * (inBurst ? 0.34 : 0.46) : 0;
      paint(v, img.data, (y * W + x) * 4);
    }
  }
  ctx.putImageData(img, 0, 0);
  ctx.fillStyle = '#ff1010';
  ctx.fillRect(524, 0, 1, H);
  ctx.fillStyle = '#ff8000';
  ctx.fillRect(566, 0, 1, H);
})();
```
